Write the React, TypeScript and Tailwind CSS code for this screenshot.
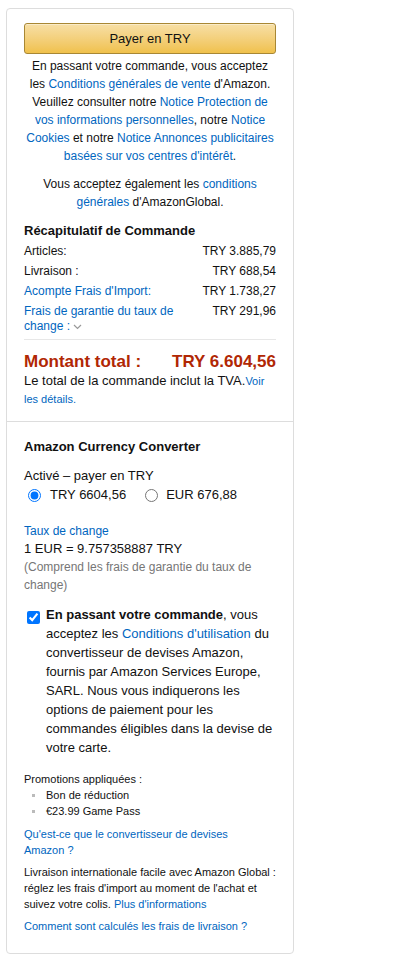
import React from "react";

const L = "text-[#0066c0]";

export default function App() {
  return (
    <div className="w-[411px] min-h-[970px] bg-white pt-[8px] pl-[6px] text-[#111]" style={{ fontFamily: '"Liberation Sans", Arial, sans-serif' }}>
      <div className="w-[288px] rounded-[4px] border border-[#dddddd]">
        {/* Section 1 */}
        <div className="px-[17px] pt-[14px] pb-[13px]">
          <button className="flex h-[31px] w-full items-center justify-center rounded-[3px] border border-[#a88734] bg-gradient-to-b from-[#f7dfa5] to-[#f0c14b] text-[13px] text-[#111] shadow-[inset_0_1px_0_rgba(255,255,255,0.4)]">
            Payer en TRY
          </button>
          <p className="mt-[3px] text-center text-[12px] leading-[18px] text-[#111]">
            En passant votre commande, vous acceptez les <span className={L}>Conditions générales de vente</span> d'Amazon. Veuillez consulter notre <span className={L}>Notice Protection de vos informations personnelles</span>, notre <span className={L}>Notice Cookies</span> et notre <span className={L}>Notice Annonces publicitaires basées sur vos centres d'intérêt</span>.
          </p>
          <p className="mt-[10px] px-[14px] text-center text-[12px] leading-[18px]">
            Vous acceptez également les <span className={L}>conditions générales</span> d'AmazonGlobal.
          </p>
          <h3 className="mt-[11px] text-[13px] font-bold leading-[18px]">Récapitulatif de Commande</h3>
          <div className="mt-[4px] flex flex-col gap-[5px] text-[12px] leading-[15px]">
            <div className="flex justify-between">
              <span>Articles:</span>
              <span>TRY 3.885,79</span>
            </div>
            <div className="flex justify-between">
              <span>Livraison :</span>
              <span>TRY 688,54</span>
            </div>
            <div className="flex justify-between">
              <span className={L}>Acompte Frais d'Import:</span>
              <span>TRY 1.738,27</span>
            </div>
            <div className="flex justify-between">
              <span className={`${L} w-[150px]`}>
                Frais de garantie du taux de change :{" "}
                <svg className="inline-block align-middle" width="9" height="6" viewBox="0 0 9 6">
                  <path d="M1 1l3.5 3.5L8 1" fill="none" stroke="#999" strokeWidth="1.2" />
                </svg>
              </span>
              <span>TRY 291,96</span>
            </div>
          </div>
          <div className="mt-[5px] h-px bg-[#e7e7e7]" />
          <div className="mt-[12px] flex justify-between text-[17px] font-bold leading-[20px] text-[#b12704]">
            <span>Montant total :</span>
            <span>TRY 6.604,56</span>
          </div>
          <p className="text-[13px] leading-[18px]">
            Le total de la commande inclut la TVA.<span className={`${L} text-[11px]`}>Voir les détails.</span>
          </p>
        </div>

        {/* Section 2 */}
        <div className="border-t border-[#dddddd] px-[17px] pt-[16px] pb-[19px]">
          <h3 className="text-[13px] font-bold leading-[18px]">Amazon Currency Converter</h3>
          <div className="mt-[11px] text-[13px] leading-[18px]">Activé – payer en TRY</div>
          <div className="flex items-center text-[13px] leading-[20px]">
            <input type="radio" name="cur" defaultChecked className="ml-[4px] mr-[9px] h-[13px] w-[13px]" />
            <span>TRY 6604,56</span>
            <input type="radio" name="cur" className="ml-[19px] mr-[8px] h-[13px] w-[13px]" />
            <span>EUR 676,88</span>
          </div>
          <div className={`mt-[17px] text-[12px] leading-[18px] ${L}`}>Taux de change</div>
          <div className="text-[13px] leading-[18px]">1 EUR = 9.757358887 TRY</div>
          <p className="text-[12px] leading-[18px] text-[#767676]">(Comprend les frais de garantie du taux de change)</p>
          <div className="mt-[11px] flex items-start">
            <input type="checkbox" defaultChecked className="ml-[3px] mt-[6px] h-[13px] w-[13px] shrink-0" />
            <p className="ml-[6px] text-[13px] leading-[19px]">
              <b>En passant votre commande</b>, vous acceptez les <span className={L}>Conditions d'utilisation</span> du convertisseur de devises Amazon, fournis par Amazon Services Europe, SARL. Nous vous indiquerons les options de paiement pour les commandes éligibles dans la devise de votre carte.
            </p>
          </div>
          <div className="mt-[14px] text-[11px] leading-[16px]">Promotions appliquées :</div>
          <ul className="text-[11px] leading-[16px]">
            <li className="flex items-center">
              <span className="ml-[8px] mr-[11px] h-[3px] w-[3px] bg-[#bbb]" />Bon de réduction
            </li>
            <li className="flex items-center">
              <span className="ml-[8px] mr-[11px] h-[3px] w-[3px] bg-[#bbb]" />€23.99 Game Pass
            </li>
          </ul>
          <p className={`mt-[7px] text-[11px] leading-[16px] ${L}`}>
            Qu'est-ce que le convertisseur de devises
            <br />
            Amazon ?
          </p>
          <p className="mt-[6px] text-[11px] leading-[16px]">
            Livraison internationale facile avec Amazon Global : réglez les frais d'import au moment de l'achat et suivez votre colis. <span className={L}>Plus d'informations</span>
          </p>
          <p className={`mt-[6px] text-[11px] leading-[16px] ${L}`}>Comment sont calculés les frais de livraison ?</p>
        </div>
      </div>
    </div>
  );
}
